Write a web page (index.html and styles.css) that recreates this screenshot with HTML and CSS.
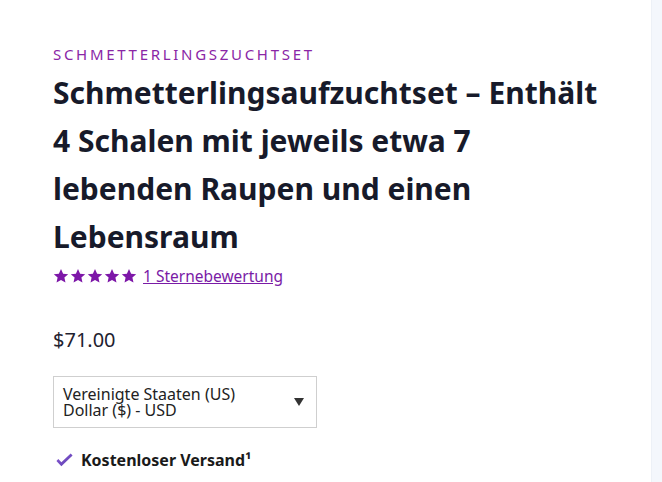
FILE: index.html
```html
<!DOCTYPE html>
<html lang="de-DE">
<head>
  <title>Schmetterlingsaufzuchtset</title>
  <meta charset="utf-8"/>
  <link rel="stylesheet" href="styles.css">
</head>
<body>
  <div class="page">
    <div class="product">
      <div class="category">SCHMETTERLINGSZUCHTSET</div>
      <h1 class="title">Schmetterlingsaufzuchtset – Enthält 4 Schalen mit jeweils etwa 7 lebenden Raupen und einen Lebensraum</h1>
      <div class="rating">
        <span class="stars">
          <svg viewBox="0 0 24 24"><path d="M12 1.5l3.2 7 7.6.8-5.7 5.1 1.6 7.5L12 18l-6.7 3.9 1.6-7.5L1.2 9.3l7.6-.8z"/></svg>
          <svg viewBox="0 0 24 24"><path d="M12 1.5l3.2 7 7.6.8-5.7 5.1 1.6 7.5L12 18l-6.7 3.9 1.6-7.5L1.2 9.3l7.6-.8z"/></svg>
          <svg viewBox="0 0 24 24"><path d="M12 1.5l3.2 7 7.6.8-5.7 5.1 1.6 7.5L12 18l-6.7 3.9 1.6-7.5L1.2 9.3l7.6-.8z"/></svg>
          <svg viewBox="0 0 24 24"><path d="M12 1.5l3.2 7 7.6.8-5.7 5.1 1.6 7.5L12 18l-6.7 3.9 1.6-7.5L1.2 9.3l7.6-.8z"/></svg>
          <svg viewBox="0 0 24 24"><path d="M12 1.5l3.2 7 7.6.8-5.7 5.1 1.6 7.5L12 18l-6.7 3.9 1.6-7.5L1.2 9.3l7.6-.8z"/></svg>
        </span>
        <a href="#" class="reviews">1 Sternebewertung</a>
      </div>
      <div class="price">$71.00</div>
      <div class="currency">
        <span class="currency-label">Vereinigte Staaten (US) Dollar ($) - USD</span>
        <span class="caret"></span>
      </div>
      <div class="shipping">
        <svg class="check" viewBox="0 0 20 16">
          <defs>
            <linearGradient id="checkfill" x1="0" y1="0" x2="1" y2="1">
              <stop offset="0" stop-color="#8a5ad6"/>
              <stop offset="1" stop-color="#5b3fae"/>
            </linearGradient>
          </defs>
          <path d="M1.5 9l2-2 3.2 3.3L16.5 1.2l2 2L6.7 14.6z" fill="url(#checkfill)"/>
        </svg>
        <span>Kostenloser Versand¹</span>
      </div>
    </div>
    <div class="sidebar"></div>
  </div>
</body>
</html>
```

FILE: styles.css
```css
html, body {
  margin: 0;
  padding: 0;
  background: #fff;
}

.page {
  display: flex;
  min-height: 482px;
  font-family: "Noto Sans", "Open Sans", sans-serif;
  color: #1b1d2b;
}

.product {
  flex: 1;
  padding: 44px 0 0 53px;
}

.sidebar {
  width: 10px;
  background: #f4f7fc;
  border-left: 1px solid #edf1f7;
}

.category {
  font-size: 15px;
  letter-spacing: 2.7px;
  color: #8a26a6;
  line-height: 20px;
}

.title {
  margin: 5px 0 0;
  font-size: 30px;
  font-weight: 700;
  line-height: 48px;
  color: #171a2a;
  max-width: 548px;
}

.rating {
  display: flex;
  align-items: center;
  gap: 6px;
  margin-top: 4px;
}

.stars {
  display: flex;
  gap: 1px;
}

.stars svg {
  width: 16px;
  height: 16px;
  fill: #7d17a8;
}

.reviews {
  font-size: 15.5px;
  color: #7a1ba6;
}

.price {
  margin-top: 39px;
  font-size: 20px;
  color: #1f2230;
}

.currency {
  display: flex;
  align-items: center;
  width: 264px;
  height: 52px;
  box-sizing: border-box;
  margin-top: 23px;
  padding: 0 12px 0 9px;
  border: 1px solid #cfcfcf;
  font-size: 16px;
  line-height: 16px;
  color: #222;
}

.currency-label {
  flex: 1;
  padding-right: 20px;
}

.caret {
  width: 0;
  height: 0;
  border-left: 5px solid transparent;
  border-right: 5px solid transparent;
  border-top: 8px solid #333;
}

.shipping {
  display: flex;
  align-items: center;
  gap: 7px;
  margin-top: 21px;
  padding-left: 2px;
  font-size: 16px;
  font-weight: 700;
  color: #1a1a1a;
}

.check {
  width: 19px;
  height: 16px;
}
```
